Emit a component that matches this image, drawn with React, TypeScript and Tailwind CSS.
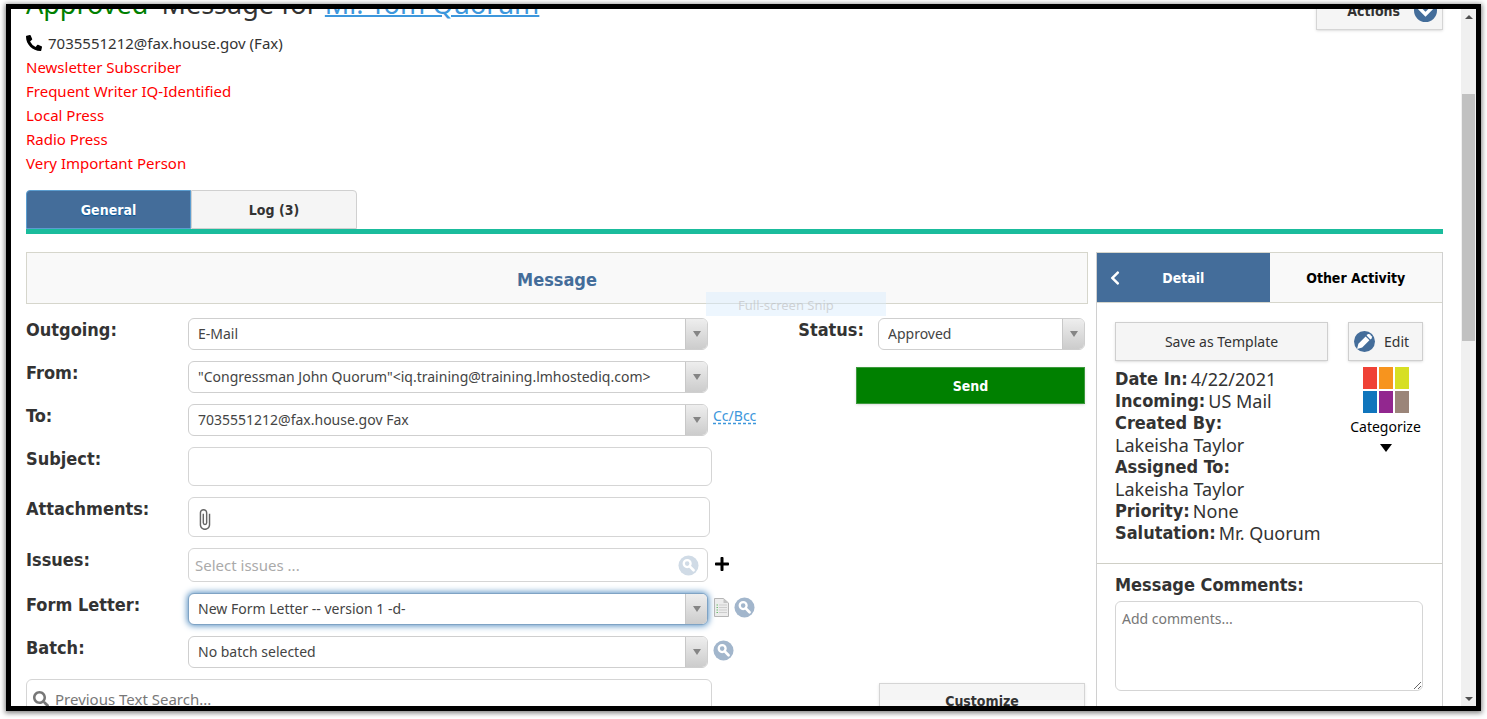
import React from 'react';
import { FaChevronLeft, FaPhoneAlt, FaPlus, FaSearch } from 'react-icons/fa';
import { MdAttachFile } from 'react-icons/md';

const flags = [
  'Newsletter Subscriber',
  'Frequent Writer IQ-Identified',
  'Local Press',
  'Radio Press',
  'Very Important Person',
];

const details = [
  { label: 'Date In:', value: '4/22/2021' },
  { label: 'Incoming:', value: 'US Mail' },
  { label: 'Created By:', value: 'Lakeisha Taylor', stacked: true },
  { label: 'Assigned To:', value: 'Lakeisha Taylor', stacked: true },
  { label: 'Priority:', value: 'None' },
  { label: 'Salutation:', value: 'Mr. Quorum' },
];

const categoryColors = ['#ef4136', '#f7941e', '#d7df23', '#1075bc', '#92278f', '#9b8579'];

const SearchBadge: React.FC<{ className: string }> = ({ className }) => (
  <svg viewBox="0 0 22 22" className={`w-[21px] h-[21px] ${className}`} aria-hidden="true">
    <circle cx="11" cy="11" r="10.5" fill="currentColor" />
    <circle cx="9.6" cy="9" r="3.6" fill="none" stroke="#fff" strokeWidth="2.4" />
    <path d="M12.3 11.9l4 4.1" stroke="#fff" strokeWidth="2.8" strokeLinecap="round" />
  </svg>
);

const ChevronBadge: React.FC = () => (
  <svg viewBox="0 0 24 24" className="w-[23px] h-[23px]" aria-hidden="true">
    <circle cx="12" cy="12" r="12" fill="#446d9a" />
    <path d="M5.5 9.5l6.5 6.5 6.5-6.5" fill="none" stroke="#fff" strokeWidth="3.6" />
  </svg>
);

const PencilBadge: React.FC = () => (
  <svg viewBox="0 0 22 22" className="w-[21px] h-[21px]" aria-hidden="true">
    <circle cx="11" cy="11" r="11" fill="#446d9a" />
    <path d="M3.2 18.8l1.4-5.400 7.600-7.600 4 4-7.600 7.600z" fill="#fff" />
    <path d="M13.2 4.800l1.300-1.300c.6-.5 1.300-.5 1.900 0l2.100 2.100c.5.6.5 1.300 0 1.900l-1.300 1.300z" fill="#fff" />
  </svg>
);

const PageIcon: React.FC = () => (
  <svg viewBox="0 0 15 19" className="w-[15px] h-[19px]" aria-hidden="true">
    <path d="M.5.5h9l5 4.500v13.500H.5z" fill="#ececec" stroke="#b5b5b5" />
    <path d="M9.500.5v4.500h5z" fill="#c4c4c4" />
    <path d="M5 7h8M5 9.500h8M5 12h8M5 14.500h8" stroke="#cdcdcd" />
    <path d="M2.500 7h1.500M2.500 9.500h1.500M2.500 12h1.500M2.500 14.500h1.500" stroke="#6cc070" />
  </svg>
);

const Triangle: React.FC<{ className: string; up?: boolean }> = ({ className, up }) => (
  <svg viewBox="0 0 10 8" preserveAspectRatio="none" className={className} aria-hidden="true">
    <path d={up ? 'M0 8h10L5 0z' : 'M0 0h10L5 8z'} fill="currentColor" />
  </svg>
);

interface SelectBoxProps {
  id: string;
  value: string;
  focused?: boolean;
}

const SelectBox: React.FC<SelectBoxProps> = ({ id, value, focused }) => (
  <div
    className={`flex flex-1 h-8 min-w-0 rounded-md border overflow-hidden bg-white ${
      focused ? 'border-[#7fa3c4] shadow-[0_0_6px_1px_#5b93c4]' : 'border-[#cfcfcf]'
    }`}
  >
    <select id={id} className="appearance-none flex-1 min-w-0 px-[9px] outline-none text-sm text-[#444]" defaultValue={value}>
      <option>{value}</option>
    </select>
    <span className="flex items-center justify-center w-[22px] border-l border-[#c8c8c8] bg-linear-to-b from-[#eeeeee] to-[#cccccc] text-[#858585]">
      <Triangle className="w-2 h-[6px]" />
    </span>
  </div>
);

const Row: React.FC<{ id: string; label: string; children: React.ReactNode }> = ({ id, label, children }) => (
  <div className="flex items-start">
    <label htmlFor={id} className="w-[162px] shrink-0 text-lg leading-6 font-bold font-[DejaVu_Sans_Condensed,DejaVu_Sans,sans-serif]">
      {label}
    </label>
    {children}
  </div>
);

const App: React.FC = () => {
  return (
    <div className="h-screen bg-white pt-1 pb-2 pl-[6px] pr-[6px] font-[Noto_Sans,sans-serif] text-[15px] text-[#333]">
      <div className="flex h-full border-5 border-black shadow-[0_1px_5px_1px_rgba(0,0,0,0.5)] overflow-hidden">
        <div className="flex-1 min-w-0 overflow-hidden pl-[15px] pr-[18px]">
          {/* Header */}
          <header className="-mt-[18px]">
            <div className="flex items-start justify-between">
              <h1 className="text-[27px] leading-[26px]">
                <span className="text-[#008000] mr-[6px]">Approved</span>{' '}
                Message for{' '}
                <a href="#contact" className="text-[#3d97dc] underline decoration-2">Mr. Tom Quorum</a>
              </h1>
              <button type="button" className="flex items-center justify-end gap-[14px] w-[127px] h-[39px] pr-[5px] border border-[#d5d5d5] bg-[#f5f5f5] shadow-sm text-sm font-bold font-[DejaVu_Sans_Condensed,DejaVu_Sans,sans-serif]">
                Actions
                <ChevronBadge />
              </button>
            </div>
            <div className="pt-px leading-6">
              <p className="flex items-center gap-[6px]">
                <FaPhoneAlt size={16} className="text-black" />
                7035551212@fax.house.gov (Fax)
              </p>
              {flags.map((flag) => (
                <p key={flag} className="text-[#ff0000]">{flag}</p>
              ))}
            </div>
          </header>

          {/* Tabs */}
          <nav className="flex mt-[15px] border-b-5 border-[#1abc9c] font-bold text-sm font-[DejaVu_Sans_Condensed,DejaVu_Sans,sans-serif]">
            <button type="button" className="w-[165px] h-[39px] rounded-tl border border-[#5b9dd0] bg-[#446d9a] text-white [text-shadow:0_1px_1px_#005599]">
              General
            </button>
            <button type="button" className="w-[166px] h-[39px] rounded-tr border border-[#d0d0d0] bg-[#f5f5f5]">
              Log (3)
            </button>
          </nav>

          <div className="flex gap-2 mt-[18px]">
            {/* Message form */}
            <main className="relative flex-1 min-w-0">
              <h2 className="h-[52px] flex items-center justify-center border border-[#d6d6cc] bg-[#f9f9f9] text-[#446d9a] text-lg font-bold pt-1 font-[DejaVu_Sans_Condensed,DejaVu_Sans,sans-serif]">
                Message
              </h2>
              <div className="absolute top-10 left-[680px] w-[180px] h-6 pl-8 bg-[#d8ebfc]/45 text-[#bbb]/60 text-[13px] leading-[26px]">
                Full-screen Snip
              </div>

              <div className="flex justify-between mt-[14px] pr-[3px]">
                <div className="flex flex-col gap-[11px]">
                  <Row id="outgoing" label="Outgoing:">
                    <div className="flex w-[520px]">
                      <SelectBox id="outgoing" value="E-Mail" />
                    </div>
                  </Row>
                  <Row id="from" label="From:">
                    <div className="flex w-[520px]">
                      <SelectBox id="from" value={'"Congressman John Quorum"<iq.training@training.lmhostediq.com>'} />
                    </div>
                  </Row>
                  <Row id="to" label="To:">
                    <div className="flex w-[520px]">
                      <SelectBox id="to" value="7035551212@fax.house.gov Fax" />
                    </div>
                    <a href="#cc" className="ml-[5px] text-sm leading-6 text-[#3d97dc] underline decoration-dashed underline-offset-2">
                      Cc/Bcc
                    </a>
                  </Row>
                  <Row id="subject" label="Subject:">
                    <input id="subject" type="text" className="w-[524px] h-[39px] px-2 rounded-md border border-[#d5d5d5]" />
                  </Row>
                  <Row id="attachments" label="Attachments:">
                    <button id="attachments" type="button" className="flex items-center w-[522px] h-10 pl-1 pt-1 rounded-md border border-[#d5d5d5] text-[#666]">
                      <MdAttachFile size={23} />
                    </button>
                  </Row>
                  <Row id="issues" label="Issues:">
                    <div className="flex items-center w-[520px] h-[34px] pl-[6px] pr-2 rounded-md border border-[#d5d5d5]">
                      <input id="issues" type="text" placeholder="Select issues ..." className="flex-1 min-w-0 outline-none placeholder:text-[#aaa]" />
                      <SearchBadge className="text-[#d0dbe6]" />
                    </div>
                    <button type="button" aria-label="Add issue" className="ml-[6px] mt-2 text-black">
                      <FaPlus size={16} />
                    </button>
                  </Row>
                  <Row id="form-letter" label="Form Letter:">
                    <div className="flex w-[520px]">
                      <SelectBox id="form-letter" value="New Form Letter -- version 1 -d-" focused />
                    </div>
                    <div className="flex items-center gap-[5px] ml-[6px] mt-1">
                      <PageIcon />
                      <SearchBadge className="text-[#a2b6cc]" />
                    </div>
                  </Row>
                  <Row id="batch" label="Batch:">
                    <div className="flex w-[520px]">
                      <SelectBox id="batch" value="No batch selected" />
                    </div>
                    <SearchBadge className="text-[#a2b6cc] ml-[5px] mt-1" />
                  </Row>
                  <div className="flex items-center gap-[6px] w-[686px] h-10 px-[6px] rounded-md border border-[#d5d5d5]">
                    <FaSearch size={16} className="text-[#777]" />
                    <input type="text" aria-label="Previous Text Search" placeholder="Previous Text Search..." className="flex-1 min-w-0 outline-none placeholder:text-[#777]" />
                  </div>
                </div>

                <div className="flex flex-col items-end">
                  <div className="flex items-start">
                    <label htmlFor="status" className="mr-[14px] text-lg leading-6 font-bold font-[DejaVu_Sans_Condensed,DejaVu_Sans,sans-serif]">
                      Status:
                    </label>
                    <div className="flex w-[207px]">
                      <SelectBox id="status" value="Approved" />
                    </div>
                  </div>
                  <button type="button" className="mt-[17px] w-[229px] h-[37px] bg-[#008000] border border-[#3d9a3d] shadow-sm text-white text-sm font-bold font-[DejaVu_Sans_Condensed,DejaVu_Sans,sans-serif]">
                    Send
                  </button>
                  <button type="button" className="mt-auto w-[206px] h-9 bg-[#f5f5f5] border border-[#d5d5d5] shadow-sm text-sm font-bold font-[DejaVu_Sans_Condensed,DejaVu_Sans,sans-serif]">
                    Customize
                  </button>
                </div>
              </div>
            </main>

            {/* Detail panel */}
            <aside className="w-[347px] shrink-0 border-x border-[#d0d0d0]">
              <nav className="flex h-[51px] border-y border-[#d6d6cc] text-sm font-bold font-[DejaVu_Sans_Condensed,DejaVu_Sans,sans-serif]">
                <button type="button" className="flex w-1/2 items-center bg-[#446d9a] text-white pl-[10px] pr-[26px]">
                  <FaChevronLeft size={16} />
                  <span className="flex-1">Detail</span>
                </button>
                <button type="button" className="w-1/2 bg-[#f9f9f9] text-black">Other Activity</button>
              </nav>

              <section className="pl-[18px] pr-[19px] pt-[19px] pb-[19px] border-b border-[#cfcfc6]">
                <div className="flex justify-between text-sm">
                  <button type="button" className="w-[213px] h-[39px] bg-[#f5f5f5] border border-[#cfcfcf] shadow-sm">
                    Save as Template
                  </button>
                  <button type="button" className="flex items-center gap-[9px] w-[75px] h-[39px] pl-[5px] bg-[#f5f5f5] border border-[#cfcfcf] shadow-sm">
                    <PencilBadge />
                    Edit
                  </button>
                </div>
                <div className="flex justify-between">
                  <dl className="pt-[7px] text-lg leading-[22px]">
                    {details.map(({ label, value, stacked }) => (
                      <div key={label} className={stacked ? '' : 'flex gap-[3px]'}>
                        <dt className="font-bold font-[DejaVu_Sans_Condensed,DejaVu_Sans,sans-serif]">{label}</dt>
                        <dd>{value}</dd>
                      </div>
                    ))}
                  </dl>
                  <button type="button" className="flex flex-col items-center self-start w-[75px] pt-[6px] text-black text-sm">
                    <span className="grid grid-cols-3 gap-[2px] w-[46px] h-[46px]">
                      {categoryColors.map((color) => (
                        <span key={color} style={{ backgroundColor: color }} />
                      ))}
                    </span>
                    <span className="leading-7">Categorize</span>
                    <Triangle className="w-3 h-2 mt-[3px]" />
                  </button>
                </div>
              </section>

              <section className="flex flex-col pl-[18px] pr-[19px] pt-[9px]">
                <label htmlFor="comments" className="text-lg leading-6 font-bold font-[DejaVu_Sans_Condensed,DejaVu_Sans,sans-serif]">
                  Message Comments:
                </label>
                <textarea id="comments" placeholder="Add comments..." className="mt-1 h-[90px] px-[6px] py-[7px] rounded-md border border-[#d5d5d5] text-sm placeholder:text-[#777]" />
              </section>
            </aside>
          </div>
        </div>

        {/* Scrollbar */}
        <div className="flex flex-col items-center w-[15px] bg-[#f0f0f0] text-[#505050]">
          <Triangle className="w-2 h-1 mt-[6px] shrink-0" up />
          <div className="w-[13px] h-[247px] mt-[75px] bg-[#c1c1c1]" />
          <Triangle className="w-2 h-1 mt-auto mb-[5px] shrink-0" />
        </div>
      </div>
    </div>
  );
};

export default App;
